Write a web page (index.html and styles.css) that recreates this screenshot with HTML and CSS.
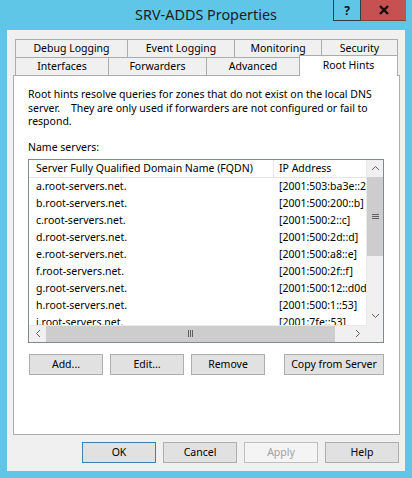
FILE: index.html
```html
<!DOCTYPE html>
<html>
<head>
<meta charset="utf-8">
<link rel="stylesheet" href="styles.css">
</head>
<body>
<div class="window">
  <div class="titlebar">
    <div class="title">SRV-ADDS Properties</div>
    <div class="caption">
      <div class="cbtn help">?</div>
      <div class="cbtn close">
        <svg width="12" height="10" viewBox="0 0 12 10"><path d="M2 1 L10 9 M10 1 L2 9" stroke="#111" stroke-width="2.4" fill="none"/></svg>
      </div>
    </div>
  </div>
  <div class="client">
    <div class="tabs">
      <div class="tabrow">
        <div class="tab w113">Debug Logging</div>
        <div class="tab w108">Event Logging</div>
        <div class="tab w88">Monitoring</div>
        <div class="tab w77">Security</div>
      </div>
      <div class="tabrow row2">
        <div class="tab w94">Interfaces</div>
        <div class="tab w99">Forwarders</div>
        <div class="tab w94">Advanced</div>
        <div class="tab w99 selected">Root Hints</div>
      </div>
    </div>
    <div class="panel">
      <p class="desc">Root hints resolve queries for zones that do not exist on the local DNS<br>server.&nbsp;&nbsp;&nbsp; They are only used if forwarders are not configured or fail to<br>respond.</p>
      <div class="label">Name servers:</div>
      <div class="list">
        <div class="list-body">
          <div class="lrow lhead"><div class="c1">Server Fully Qualified Domain Name (FQDN)</div><div class="c2">IP Address</div></div>
          <div class="lrow"><div class="c1">a.root-servers.net.</div><div class="c2">[2001:503:ba3e::2:30]</div></div>
          <div class="lrow"><div class="c1">b.root-servers.net.</div><div class="c2">[2001:500:200::b]</div></div>
          <div class="lrow"><div class="c1">c.root-servers.net.</div><div class="c2">[2001:500:2::c]</div></div>
          <div class="lrow"><div class="c1">d.root-servers.net.</div><div class="c2">[2001:500:2d::d]</div></div>
          <div class="lrow"><div class="c1">e.root-servers.net.</div><div class="c2">[2001:500:a8::e]</div></div>
          <div class="lrow"><div class="c1">f.root-servers.net.</div><div class="c2">[2001:500:2f::f]</div></div>
          <div class="lrow"><div class="c1">g.root-servers.net.</div><div class="c2">[2001:500:12::d0d]</div></div>
          <div class="lrow"><div class="c1">h.root-servers.net.</div><div class="c2">[2001:500:1::53]</div></div>
          <div class="lrow"><div class="c1">i.root-servers.net.</div><div class="c2">[2001:7fe::53]</div></div>
        </div>
        <div class="vscroll">
          <div class="sarrow"><svg width="9" height="6" viewBox="0 0 9 6"><path d="M1 5 L4.5 1.5 L8 5" stroke="#606060" stroke-width="1" fill="none"/></svg></div>
          <div class="vthumb"><svg width="7" height="7" viewBox="0 0 7 7"><path d="M0 1.5 H7 M0 3.5 H7 M0 5.5 H7" stroke="#606060" stroke-width="1"/></svg></div>
          <div class="vtrack"></div>
          <div class="sarrow"><svg width="9" height="6" viewBox="0 0 9 6"><path d="M1 1 L4.5 4.5 L8 1" stroke="#606060" stroke-width="1" fill="none"/></svg></div>
        </div>
        <div class="hscroll">
          <div class="harrow"><svg width="6" height="9" viewBox="0 0 6 9"><path d="M5 1 L1.5 4.5 L5 8" stroke="#606060" stroke-width="1" fill="none"/></svg></div>
          <div class="hthumb"><svg width="7" height="7" viewBox="0 0 7 7"><path d="M1.5 0 V7 M3.5 0 V7 M5.5 0 V7" stroke="#606060" stroke-width="1"/></svg></div>
          <div class="htrack"></div>
          <div class="harrow"><svg width="6" height="9" viewBox="0 0 6 9"><path d="M1 1 L4.5 4.5 L1 8" stroke="#606060" stroke-width="1" fill="none"/></svg></div>
        </div>
        <div class="corner"></div>
      </div>
      <div class="btnrow">
        <div class="btn">Add...</div>
        <div class="btn">Edit...</div>
        <div class="btn">Remove</div>
        <div class="btn wide">Copy from Server</div>
      </div>
    </div>
    <div class="dlgbtns">
      <div class="btn default">OK</div>
      <div class="btn">Cancel</div>
      <div class="btn disabled">Apply</div>
      <div class="btn">Help</div>
    </div>
  </div>
</div>
</body>
</html>
```
FILE: styles.css
```css
* { box-sizing: border-box; }
body {
  margin: 0;
  font-family: "Noto Sans", "Open Sans", sans-serif;
  font-size: 10.5px;
  color: #000;
}
.window {
  width: 412px;
  height: 478px;
  background: #5fc6e7;
  display: flex;
  flex-direction: column;
  overflow: hidden;
}
.titlebar {
  height: 30px;
  flex: none;
  display: grid;
  grid-template-columns: 1fr auto 1fr;
}
.title {
  grid-column: 2;
  font-size: 14.4px;
  line-height: 30px;
  color: #1c1c1c;
  white-space: nowrap;
}
.caption {
  grid-column: 3;
  justify-self: end;
  align-self: start;
  display: flex;
  margin-right: 6px;
}
.cbtn {
  display: flex;
  align-items: center;
  justify-content: center;
}
.help {
  width: 27px;
  height: 21px;
  border: 1px solid #2c3d4c;
  border-top: none;
  border-right: none;
  font-weight: bold;
  font-size: 12px;
  color: #111;
}
.close {
  width: 46px;
  height: 21px;
  background: #c75050;
  border-left: 1px solid #2c3d4c;
  border-bottom: 1px solid #8e3a3a;
}
.client {
  height: 441px;
  margin: 0 7px;
  background: #f0f0f0;
  padding: 9px 5px 0 6px;
  display: flex;
  flex-direction: column;
}
.tabs {
  padding-left: 2px;
}
.tabrow {
  display: flex;
  height: 18px;
}
.tab {
  height: 18px;
  border: 1px solid #acacac;
  border-bottom: none;
  background: #f0f0f0;
  text-align: center;
  line-height: 17px;
  white-space: nowrap;
}
.tab + .tab { margin-left: -1px; }
.w113 { width: 113px; }
.w108 { width: 108px; }
.w88 { width: 88px; }
.w77 { width: 77px; }
.w94 { width: 94px; }
.w99 { width: 99px; }
.tab.selected {
  position: relative;
  z-index: 1;
  height: 21px;
  margin-top: -2px;
  background: #fff;
  line-height: 19px;
}
.panel {
  height: 360px;
  border: 1px solid #acacac;
  background: #fff;
  padding: 12px 14px 0 14px;
  display: flex;
  flex-direction: column;
}
.desc {
  margin: 0;
  line-height: 13.5px;
  white-space: nowrap;
}
.label {
  margin-top: 11px;
  line-height: 15px;
}
.list {
  margin-top: 4px;
  width: 356px;
  height: 184px;
  border: 1px solid #828790;
  display: grid;
  grid-template-columns: 1fr 17px;
  grid-template-rows: 1fr 17px;
}
.list-body {
  overflow: hidden;
}
.lrow {
  display: flex;
  height: 17px;
  line-height: 17px;
  white-space: nowrap;
}
.lrow .c1 {
  width: 244px;
  padding-left: 7px;
  overflow: hidden;
}
.lrow .c2 {
  width: 93px;
  padding-left: 6px;
  overflow: hidden;
}
.lhead {
  height: 18px;
  border-bottom: 1px solid #e5e5e5;
  line-height: 17px;
}
.lhead .c2 {
  border-left: 1px solid #e5e5e5;
  padding-left: 5px;
}
.vscroll {
  display: flex;
  flex-direction: column;
  background: #f0f0f0;
  border-left: 1px solid #e8e8e8;
}
.sarrow {
  height: 17px;
  flex: none;
  display: flex;
  align-items: center;
  justify-content: center;
  background: #f0f0f0;
}
.vthumb {
  height: 79px;
  flex: none;
  background: #cdcdcd;
  display: flex;
  align-items: center;
  justify-content: center;
}
.vtrack { flex: 1; }
.hscroll {
  display: flex;
  background: #f0f0f0;
  border-top: 1px solid #e8e8e8;
}
.harrow {
  width: 17px;
  flex: none;
  display: flex;
  align-items: center;
  justify-content: center;
}
.hthumb {
  width: 289px;
  flex: none;
  background: #cdcdcd;
  display: flex;
  align-items: center;
  justify-content: center;
}
.htrack { flex: 1; }
.corner { background: #f0f0f0; }
.btnrow {
  display: flex;
  gap: 7px;
  margin-top: 11px;
  padding-left: 1px;
}
.btn {
  width: 74px;
  height: 21px;
  border: 1px solid #adadad;
  background: #e1e1e1;
  text-align: center;
  line-height: 19px;
  white-space: nowrap;
}
.btn.wide {
  width: 100px;
  margin-left: 12px;
}
.dlgbtns {
  display: flex;
  justify-content: flex-end;
  gap: 7px;
  margin-top: 7px;
  padding-right: 1px;
}
.btn.default { border-color: #3c7fb1; }
.btn.disabled {
  background: #f4f4f4;
  border-color: #bfbfbf;
  color: #a0a0a0;
}
```
